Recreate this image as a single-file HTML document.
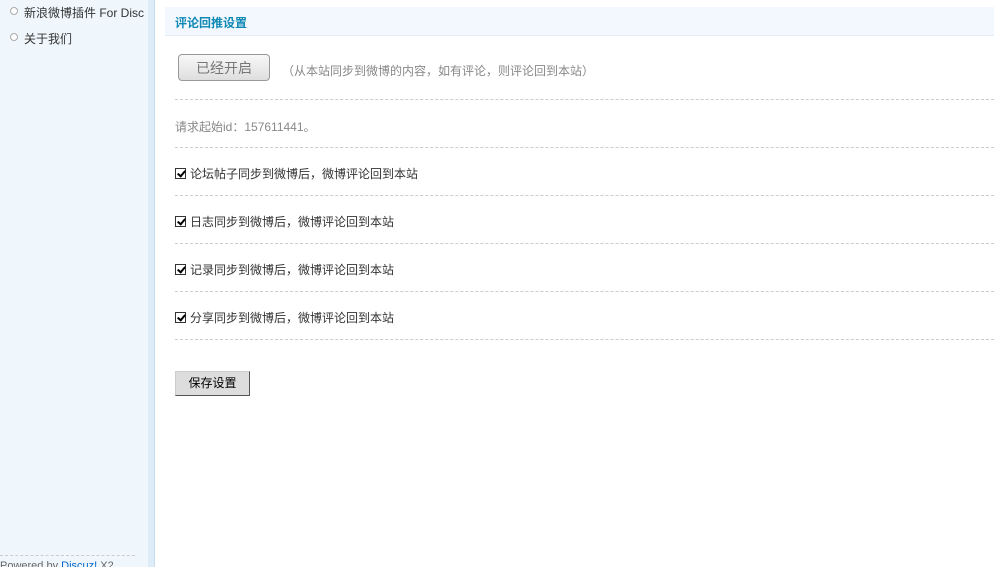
<!DOCTYPE html>
<html><head><meta charset="utf-8"><style>
body{margin:0;width:994px;height:567px;overflow:hidden;background:#fff;font-family:"Liberation Sans","Noto Sans CJK SC",sans-serif;font-size:12px;color:#333;position:relative}
.side{position:absolute;left:0;top:0;width:148px;height:567px;background:#f0f7fc;overflow:hidden}
.strip{position:absolute;left:148px;top:0;width:6px;height:567px;background:#deecf8;border-right:1px solid #c5dcef}
.side li{position:absolute;left:10px;white-space:nowrap;list-style:none;color:#333;font-size:12px}
.side li:before{content:"";position:absolute;left:0;top:3px;width:6px;height:6px;border:1px solid #aaa;border-radius:50%;background:#fff}
.side li span{margin-left:14px}
.pw{position:absolute;left:0;top:560px;font-size:11px;color:#666;white-space:nowrap}
.dl{position:absolute;left:0;top:555px;width:135px;border-top:1px dashed #ccc}
.hd{position:absolute;left:165px;top:7px;width:829px;height:28px;background:#f2f8fd;border-bottom:1px solid #e2edf6}
.hd b{position:absolute;left:10px;top:7px;color:#0f88b5;font-size:12px}
.btn{position:absolute;left:178px;top:54px;width:92px;height:27px;border:1px solid #999;border-radius:4px;background:linear-gradient(#f8f8f8,#dedede);color:#777;font-size:14px;text-align:center;line-height:27px;box-sizing:border-box}
.t{position:absolute;white-space:nowrap}
.g{color:#888}
.hr{position:absolute;left:175px;width:819px;border-top:1px dashed #ccc}
.cb{position:absolute;left:175px;width:11px;height:11px;border:1px solid #333;background:#fff;box-sizing:border-box}
.cb:after{content:"";position:absolute;left:3px;top:0px;width:3px;height:6px;border:solid #000;border-width:0 2px 2px 0;transform:rotate(40deg)}
.save{position:absolute;left:175px;top:371px;width:75px;height:25px;background:#ddd;border:1px solid #ccc;border-right-color:#555;border-bottom-color:#555;box-sizing:border-box;text-align:center;line-height:23px;font-size:12px;color:#000}
</style></head><body>
<div class="side">
<ul style="margin:0;padding:0">
<li style="top:4px"><span>新浪微博插件 For Disc</span></li>
<li style="top:30px"><span>关于我们</span></li>
</ul>
<div class="dl"></div>
<div class="pw">Powered by <span style="color:#06c">Discuz!</span> X2</div>
</div>
<div class="strip"></div>
<div class="hd"><b>评论回推设置</b></div>
<div class="btn">已经开启</div>
<div class="t g" style="left:282px;top:62px">（从本站同步到微博的内容，如有评论，则评论回到本站）</div>
<div class="hr" style="top:99px"></div>
<div class="t g" style="left:175px;top:118px">请求起始id：157611441。</div>
<div class="hr" style="top:147px"></div>
<div class="cb" style="top:168px"></div><div class="t" style="left:190px;top:165px">论坛帖子同步到微博后，微博评论回到本站</div>
<div class="hr" style="top:195px"></div>
<div class="cb" style="top:216px"></div><div class="t" style="left:190px;top:213px">日志同步到微博后，微博评论回到本站</div>
<div class="hr" style="top:243px"></div>
<div class="cb" style="top:264px"></div><div class="t" style="left:190px;top:261px">记录同步到微博后，微博评论回到本站</div>
<div class="hr" style="top:291px"></div>
<div class="cb" style="top:312px"></div><div class="t" style="left:190px;top:309px">分享同步到微博后，微博评论回到本站</div>
<div class="hr" style="top:339px"></div>
<div class="save">保存设置</div>
</body></html>
